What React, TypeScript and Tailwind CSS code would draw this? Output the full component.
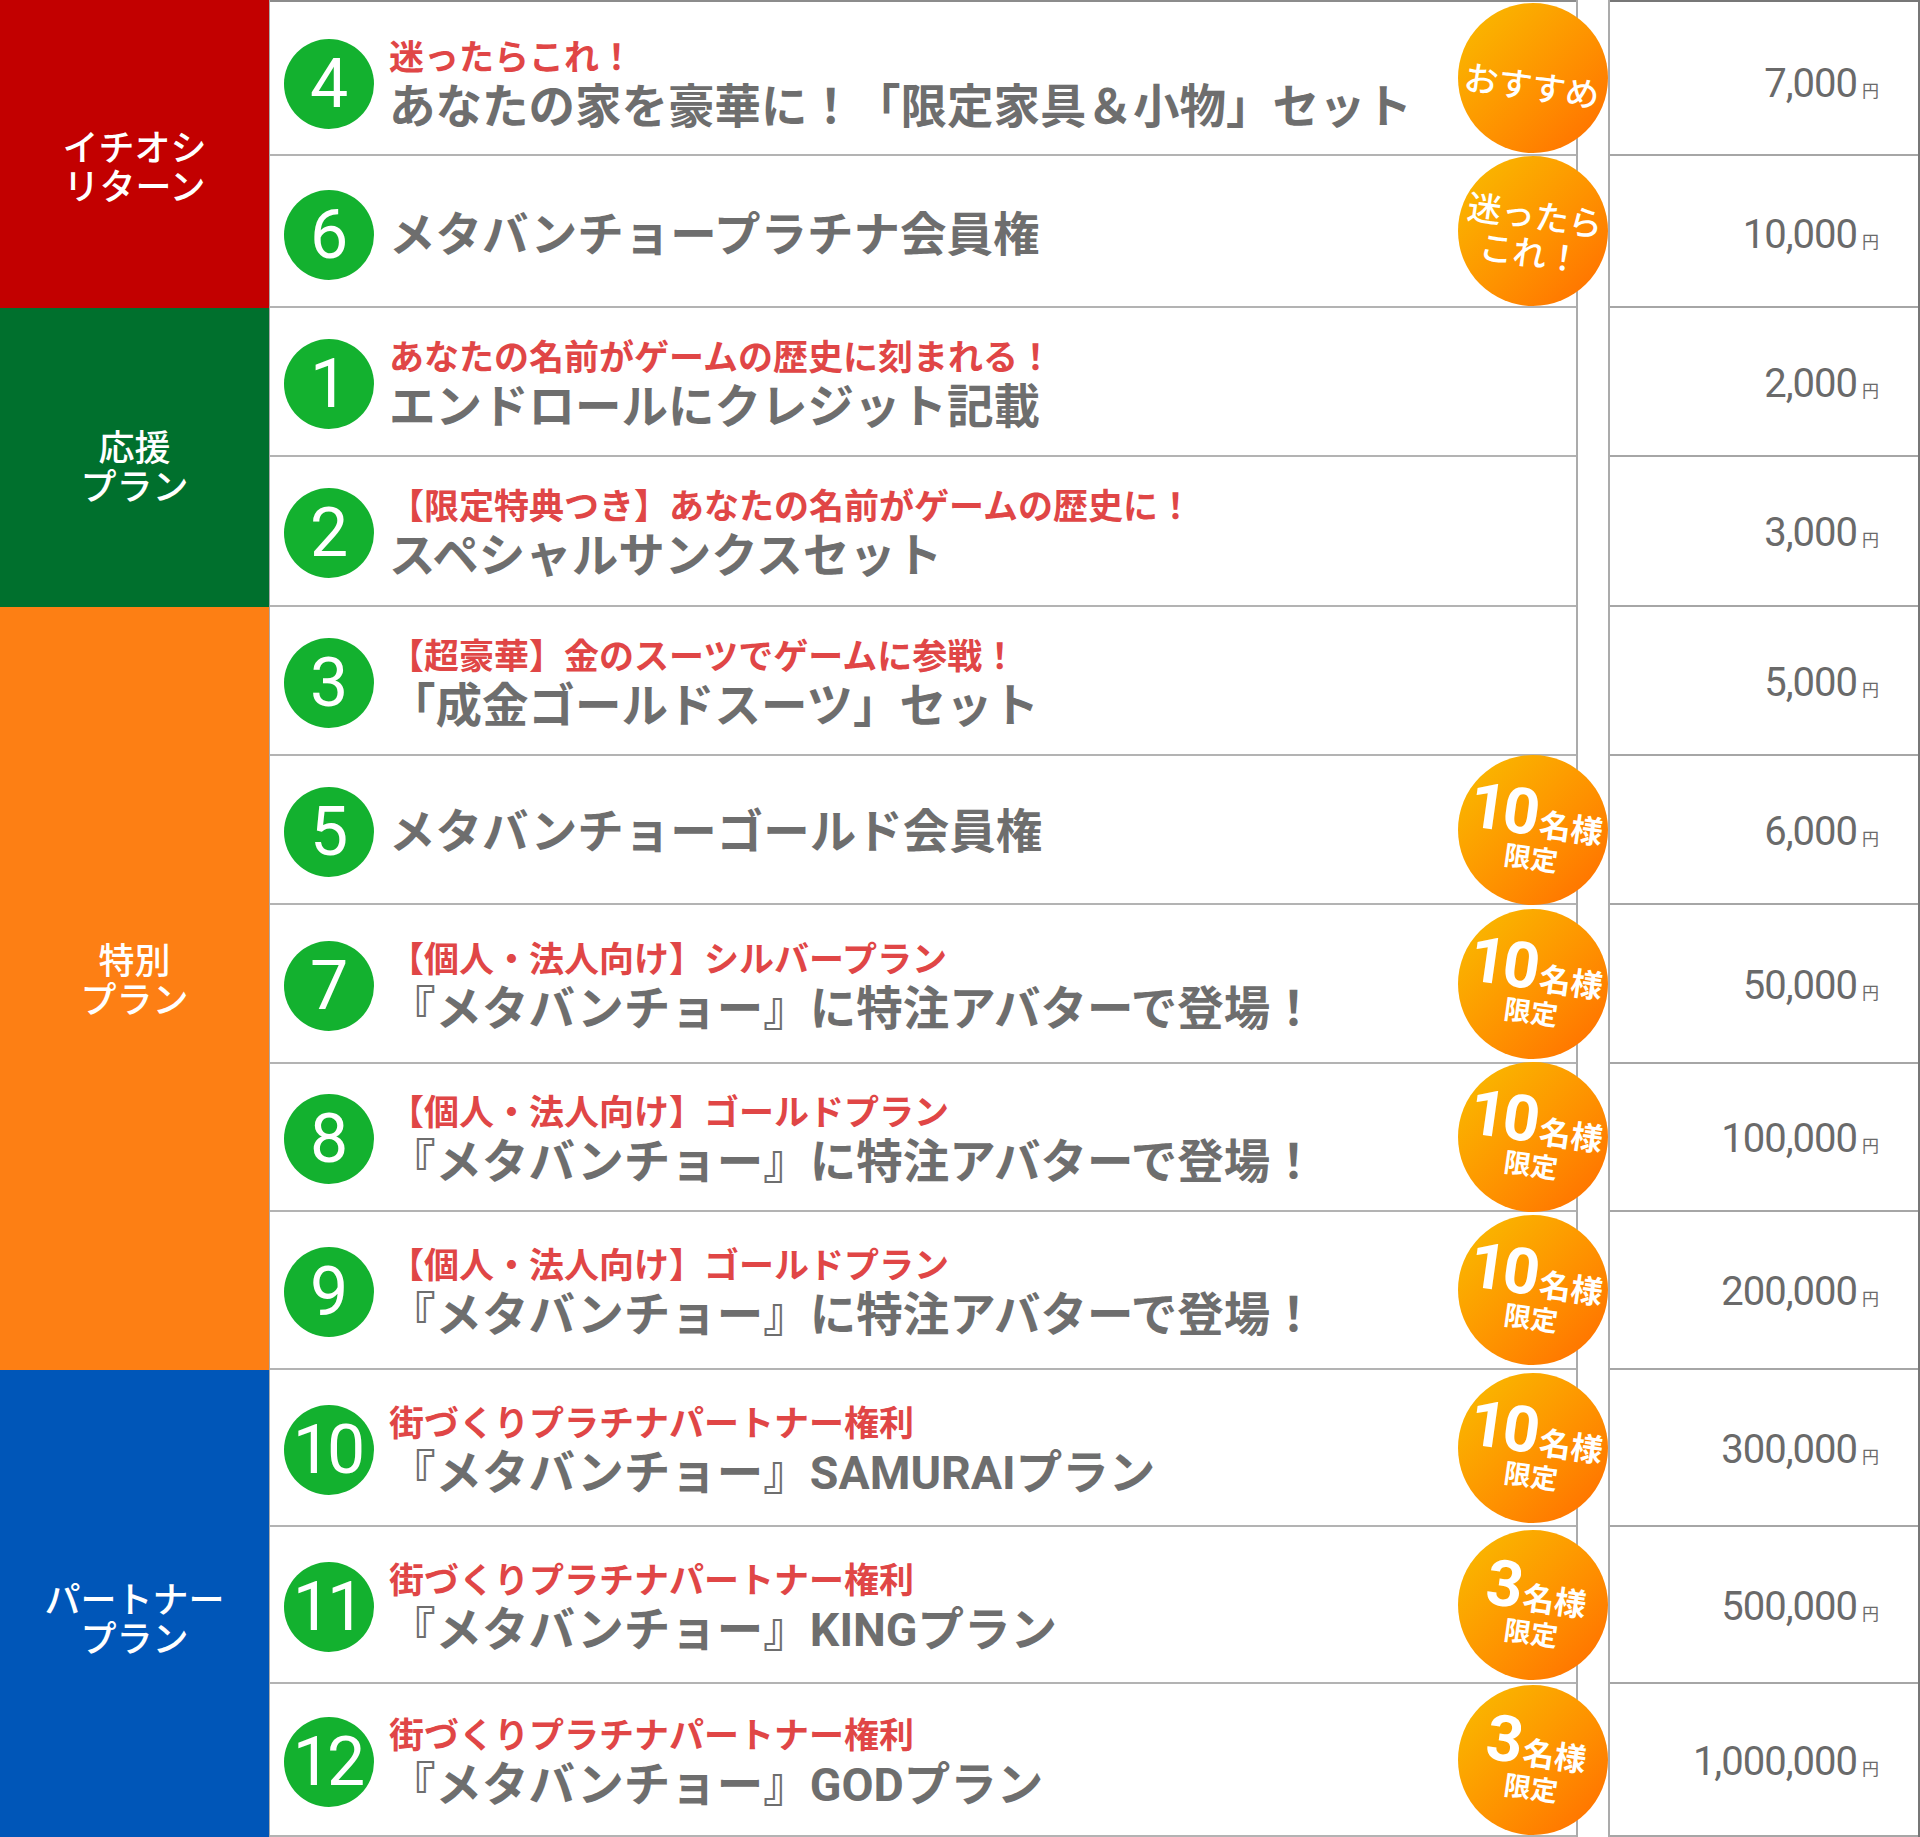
type BadgeT =
  | { kind: "text"; lines: string[] }
  | { kind: "limit"; count: string };

type Row = {
  no: string;
  sub?: string;
  title: string;
  price: string;
  h: string;
  badge?: BadgeT;
};

const rows: Row[] = [
  { no: "4", sub: "迷ったらこれ！", title: "あなたの家を豪華に！「限定家具＆小物」セット", price: "7,000", h: "h-[156px] pt-[12px]", badge: { kind: "text", lines: ["おすすめ"] } },
  { no: "6", title: "メタバンチョープラチナ会員権", price: "10,000", h: "h-[152px] pt-[8px]", badge: { kind: "text", lines: ["迷ったら", "これ！"] } },
  { no: "1", sub: "あなたの名前がゲームの歴史に刻まれる！", title: "エンドロールにクレジット記載", price: "2,000", h: "h-[149px] pt-[4px]" },
  { no: "2", sub: "【限定特典つき】あなたの名前がゲームの歴史に！", title: "スペシャルサンクスセット", price: "3,000", h: "h-[150px] pt-[4px]" },
  { no: "3", sub: "【超豪華】金のスーツでゲームに参戦！", title: "「成金ゴールドスーツ」セット", price: "5,000", h: "h-[149px] pt-[4px]" },
  { no: "5", title: "メタバンチョーゴールド会員権", price: "6,000", h: "h-[149px] pt-[4px]", badge: { kind: "limit", count: "10" } },
  { no: "7", sub: "【個人・法人向け】シルバープラン", title: "『メタバンチョー』に特注アバターで登場！", price: "50,000", h: "h-[159px] pt-[4px]", badge: { kind: "limit", count: "10" } },
  { no: "8", sub: "【個人・法人向け】ゴールドプラン", title: "『メタバンチョー』に特注アバターで登場！", price: "100,000", h: "h-[148px] pt-[4px]", badge: { kind: "limit", count: "10" } },
  { no: "9", sub: "【個人・法人向け】ゴールドプラン", title: "『メタバンチョー』に特注アバターで登場！", price: "200,000", h: "h-[158px] pt-[4px]", badge: { kind: "limit", count: "10" } },
  { no: "10", sub: "街づくりプラチナパートナー権利", title: "『メタバンチョー』SAMURAIプラン", price: "300,000", h: "h-[157px] pt-[4px]", badge: { kind: "limit", count: "10" } },
  { no: "11", sub: "街づくりプラチナパートナー権利", title: "『メタバンチョー』KINGプラン", price: "500,000", h: "h-[157px] pt-[4px]", badge: { kind: "limit", count: "3" } },
  { no: "12", sub: "街づくりプラチナパートナー権利", title: "『メタバンチョー』GODプラン", price: "1,000,000", h: "h-[153px] pt-[4px]", badge: { kind: "limit", count: "3" } },
];

const groups = [
  { label: ["イチオシ", "リターン"], bg: "bg-[#c20000] pt-[22px]", from: 0, to: 2 },
  { label: ["応援", "プラン"], bg: "bg-[#00702d] pt-[14px]", from: 2, to: 4 },
  { label: ["特別", "プラン"], bg: "bg-[#fd7f14] pb-[22px]", from: 4, to: 9 },
  { label: ["パートナー", "プラン"], bg: "bg-[#0056b8] pt-[26px]", from: 9, to: 12 },
];

function Badge({ b }: { b: BadgeT }) {
  return (
    <div className="absolute right-[-32px] top-1/2 -translate-y-1/2 z-10 w-[150px] h-[150px] rounded-full bg-linear-to-br from-[#f8bd00] to-[#ff6a00] flex items-center justify-center text-white">
      {b.kind === "text" ? (
        <div className={`rotate-[8deg] flex flex-col items-center ${b.lines.length === 1 ? "pt-[14px]" : "pt-[4px]"}`}>
          {b.lines.map((l) => (
            <span key={l} className="text-[34px] leading-[38px] font-medium">
              {l}
            </span>
          ))}
        </div>
      ) : (
        <div className="rotate-[8deg] flex flex-col items-center pl-[4px]">
          <div className="flex items-baseline">
            <span className="font-['Roboto',sans-serif] font-bold text-[64px] leading-[54px] tracking-[-3px]">
              {b.count}
            </span>
            <span className="text-[32px] leading-[36px] font-bold ml-[4px]">名様</span>
          </div>
          <span className="text-[27px] leading-[32px] font-bold">限定</span>
        </div>
      )}
    </div>
  );
}

function PlanRow({ r, first }: { r: Row; first: boolean }) {
  return (
    <div
      className={`${r.h} relative flex items-center pl-[14px] border-b-2 border-[#b3b3b3] ${first ? "border-t-2 border-t-[#8c8c8c]" : ""}`}
    >
      <div
        className={`w-[90px] h-[90px] shrink-0 rounded-full bg-[#13b12f] text-white flex items-center justify-center font-['Roboto',sans-serif] leading-none ${r.no.length > 1 ? "text-[68px] tracking-[-4px] pr-[4px]" : "text-[68px]"}`}
      >
        {r.no}
      </div>
      <div className="ml-[15px] flex flex-col font-bold whitespace-nowrap">
        {r.sub && <p className="text-[35px] leading-[46px] text-[#e04646]">{r.sub}</p>}
        <p className="text-[46.5px] leading-[58px] text-[#6e6e6e] font-['Roboto','Noto_Sans_CJK_JP',sans-serif]">
          {r.title}
        </p>
      </div>
      {r.badge && <Badge b={r.badge} />}
    </div>
  );
}

export default function App() {
  return (
    <div className="w-[1920px] h-[1837px] flex bg-white font-['Noto_Sans_CJK_JP',sans-serif]">
      <div className="w-[1578px] shrink-0 flex flex-col">
        {groups.map((g) => (
          <div key={g.label.join("")} className="flex">
            <div className={`w-[269px] shrink-0 flex items-center justify-center ${g.bg}`}>
              <p className="text-white text-[36px] leading-[39px] font-medium text-center">
                {g.label.map((l) => (
                  <span key={l} className="block">
                    {l}
                  </span>
                ))}
              </p>
            </div>
            <div className="flex-1 flex flex-col border-l border-r-2 border-[#ababab]">
              {rows.slice(g.from, g.to).map((r, i) => (
                <PlanRow key={r.no} r={r} first={g.from === 0 && i === 0} />
              ))}
            </div>
          </div>
        ))}
      </div>
      <div className="w-[30px] shrink-0" />
      <div className="flex-1 flex flex-col border-l-2 border-r-2 border-l-[#ababab] border-r-[#777]">
        {rows.map((r, i) => (
          <div
            key={r.no}
            className={`${r.h} flex items-center justify-end pr-[39px] border-b-2 border-[#a6a6a6] ${i === 0 ? "border-t-2 border-t-[#777]" : ""}`}
          >
            <div className="flex items-baseline text-[#6a6a6a]">
              <span className="font-['Roboto',sans-serif] text-[40px] tracking-[-1px] leading-none">{r.price}</span>
              <span className="text-[17px] leading-none ml-[5px]">円</span>
            </div>
          </div>
        ))}
      </div>
    </div>
  );
}
